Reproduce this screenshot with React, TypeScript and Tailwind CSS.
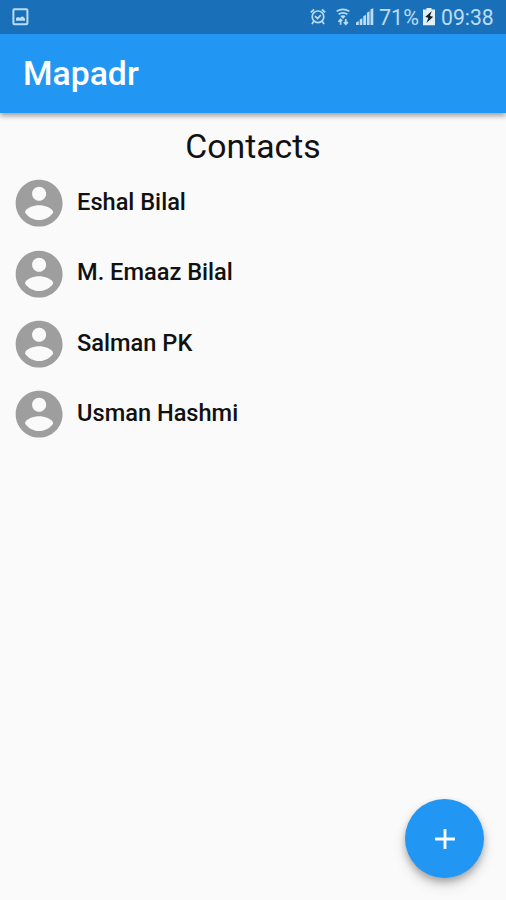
import { MdAdd } from "react-icons/md";

const contacts = ["Eshal Bilal", "M. Emaaz Bilal", "Salman PK", "Usman Hashmi"];

function AccountCircle() {
  return (
    <svg className="size-[56.25px] shrink-0 text-[#9e9e9e]" viewBox="0 0 24 24" fill="currentColor">
      <path d="M12 2C6.48 2 2 6.48 2 12s4.48 10 10 10 10-4.48 10-10S17.52 2 12 2zm0 3c1.66 0 3 1.34 3 3s-1.34 3-3 3-3-1.34-3-3 1.34-3 3-3zm0 14.2c-2.5 0-4.71-1.28-6-3.22.03-1.99 4-3.08 6-3.08 1.99 0 5.97 1.09 6 3.08-1.29 1.94-3.5 3.22-6 3.22z" />
    </svg>
  );
}

function StatusBar() {
  return (
    <div className="flex h-[34px] items-center bg-[#1a70b8] pl-3 pr-3 text-[#bcdcf3]">
      <svg className="h-[18px] w-[17px]" viewBox="0 0 17 18" fill="none" stroke="currentColor">
        <rect x="1.4" y="1.2" width="14" height="15" rx="1" strokeWidth="2" />
        <path d="M4 12.8V10l2-1 2 .7 2.5-1.5L13 10.5v2.3z" fill="currentColor" stroke="none" />
      </svg>

      <div className="ml-auto flex items-center">
        {/* alarm */}
        <svg className="h-[18px] w-[16px]" viewBox="0 0 16 18" fill="none" stroke="currentColor" strokeWidth="1.7">
          <circle cx="8" cy="8.8" r="5.8" />
          <path d="M.8 4.4 4 1.5M15.2 4.4 12 1.5M3.7 13.3 2 16.1M12.3 13.3l1.7 2.8M5 8.2l2.5 2.3 3.3-3.3" />
        </svg>
        {/* wifi */}
        <svg className="ml-[10px] h-[18px] w-[14px]" viewBox="0 0 14 18" fill="none" stroke="currentColor" strokeWidth="1.7">
          <path d="M.6 3.4q6.4-4 12.8 0M2.6 6.2q4.4-2.8 8.8 0" />
          <path d="M4.3 8q2.7-1.6 5.4 0L7 11z" fill="currentColor" stroke="none" />
          <path d="M4.6 16.8v-5M2.4 13.8l2.2-2.4L6.2 13M9.8 11v5M7.9 14.2l1.9 2 2.1-2" />
        </svg>
        {/* signal */}
        <svg className="ml-[6px] h-[18px] w-[18px]" viewBox="0 0 18 18" fill="currentColor">
          <path d="M0 14.5 2.8 13v4H0zM3.7 11.5l2.7-1.3V17H3.7zM7.3 8.2l2.7-1.4V17H7.3zM10.9 4.8l2.7-1.6V17h-2.7zM14.5 1.2l2.8-1V17h-2.8z" />
        </svg>
        <span className="ml-[5px] w-[40px] whitespace-nowrap pt-px text-[21.5px] leading-none">71%</span>
        <svg className="ml-[4px] h-[18px] w-[12px]" viewBox="0 0 12 18">
          <path d="M3.5 0h5v1.5H12v15.7H0V1.5h3.5z" fill="#e3f0f8" />
          <path d="M8.8 3 2.2 9l3.2.8L3.4 15l6.8-6.3-3.2-.8z" fill="#10212e" />
        </svg>
        <span className="ml-[6px] w-[53px] whitespace-nowrap pt-px text-[21.2px] leading-none">09:38</span>
      </div>
    </div>
  );
}

export default function App() {
  return (
    <div className="relative flex h-[900px] w-[506px] flex-col overflow-hidden bg-[#fafafa] font-['Roboto',sans-serif] text-[#111111]">
      <div className="z-10 shadow-[0_3px_5px_rgba(0,0,0,0.35)]">
        <StatusBar />
        <header className="flex h-[79px] items-center bg-[#2196f3] px-[23px]">
          <h1 className="text-[33.75px] font-medium leading-none text-white">Mapadr</h1>
        </header>
      </div>

      <main className="flex flex-col pt-[14px]">
        <h2 className="text-center text-[33.75px] leading-[40px]">Contacts</h2>
        <ul className="pt-[1.2px]">
          {contacts.map((name) => (
            <li key={name} className="flex h-[70.3px] items-center pl-[10.8px]">
              <AccountCircle />
              <span className="pb-[1px] pl-[10px] text-[23.6px] font-medium leading-none">{name}</span>
            </li>
          ))}
        </ul>
      </main>

      <button
        aria-label="Add contact"
        className="absolute bottom-[22px] right-[22px] flex size-[79px] items-center justify-center rounded-full bg-[#2196f3] text-white shadow-[0_4px_7px_rgba(0,0,0,0.26),0_8px_14px_rgba(0,0,0,0.12)]"
      >
        <MdAdd size={34} />
      </button>
    </div>
  );
}
